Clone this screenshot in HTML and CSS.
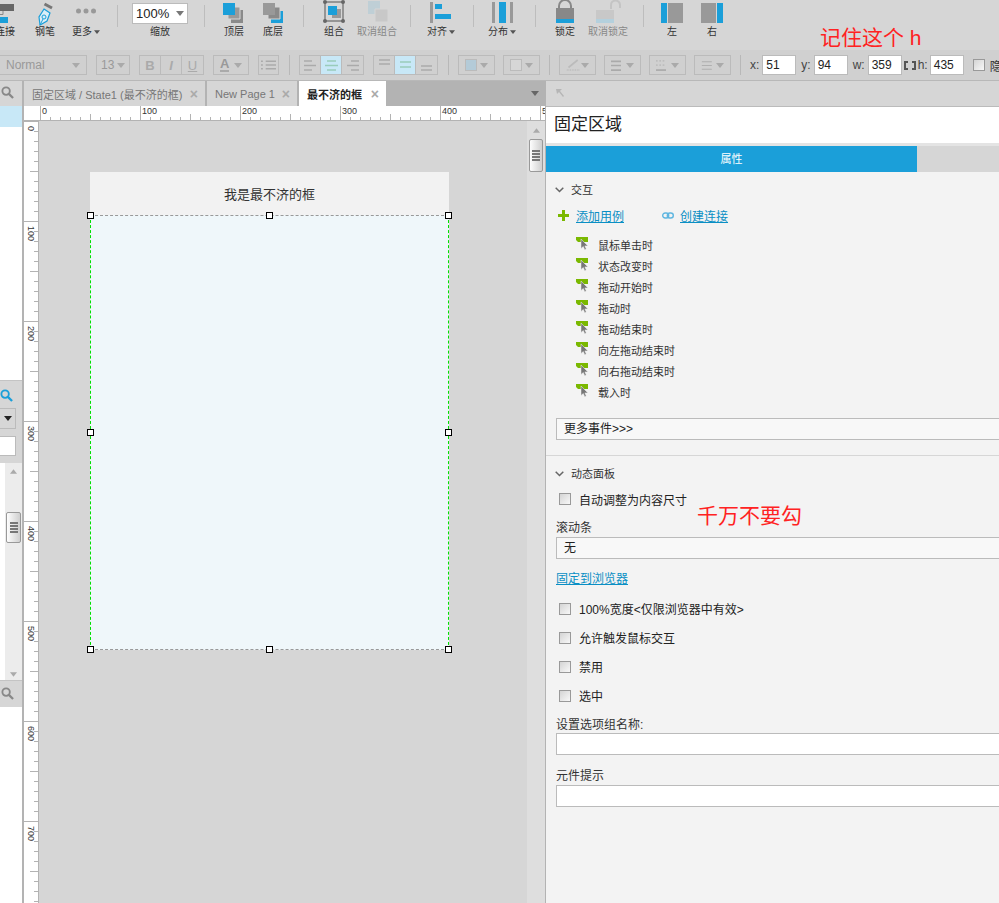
FILE: index.html
```html
<!DOCTYPE html>
<html lang="en">
<head>
    <meta charset="UTF-8">
    <title>固定区域</title>
    <link rel="stylesheet" href="styles.css">
</head>
<body>
    <svg class="defs" width="0" height="0">
        <symbol id="search" viewBox="0 0 14 14"><circle cx="5.5" cy="5.5" r="4" fill="none" stroke="currentColor" stroke-width="2"/><path d="M8.5 8.5 13 13" stroke="currentColor" stroke-width="2.4"/></symbol>
        <symbol id="caret" viewBox="0 0 8 5"><path d="M0 0h8L4 5z" fill="currentColor"/></symbol>
        <symbol id="event" viewBox="0 0 13 13"><path d="M0 0h12v5H2L0 3z" fill="#7ab800"/><path d="M5 2v9.500l2.300-2 1.400 3.200 1.600-.7-1.400-3.100H12z" fill="#777" stroke="#f3f3f3" stroke-width=".5"/></symbol>
    </svg>

    <header class="toolbar">
        <div class="tool w40">
            <svg width="26" height="24" viewBox="0 0 26 24"><path d="M4 4h18v7H4z" fill="#666"/><path d="M11 11v3.500H4V17" stroke="#888" fill="none"/><path d="M-2 17H16v6H-2z" fill="#1b9fd9"/></svg>
            <span>连接</span>
        </div>
        <div class="tool w40">
            <svg width="22" height="26" viewBox="0 0 22 26"><path d="M10.500 4l7.500 4" stroke="#777" stroke-width="3"/><path d="M10 9l6 4-3 8-7 4-1-8z" fill="#dbeef7" stroke="#1b9fd9" stroke-width="1.200"/><circle cx="10" cy="17" r="2" fill="none" stroke="#1b9fd9"/><path d="M6 25l3-6" stroke="#1b9fd9"/></svg>
            <span>钢笔</span>
        </div>
        <div class="tool w42">
            <svg width="20" height="24" viewBox="0 0 20 24"><g fill="#999"><circle cx="2.500" cy="11" r="2.500"/><circle cx="10" cy="11" r="2.500"/><circle cx="17.500" cy="11" r="2.500"/></g></svg>
            <span>更多<svg class="mini-caret"><use href="#caret"/></svg></span>
        </div>
        <div class="sep"></div>
        <div class="tool zoom-tool">
            <div class="zoom-select">100%<svg class="caret"><use href="#caret"/></svg></div>
            <span>缩放</span>
        </div>
        <div class="sep"></div>
        <div class="tool w38">
            <svg width="22" height="24" viewBox="0 0 22 24"><path d="M8 10h12v13H8z" fill="#8a8a8a"/><path d="M5 7h12v12H5z" fill="#999" stroke="#d6d6d6"/><path d="M0 3h12v12H0z" fill="#1b9fd9"/></svg>
            <span>顶层</span>
        </div>
        <div class="tool w40">
            <svg width="22" height="24" viewBox="0 0 22 24"><path d="M9 11h12v12H9z" fill="#1b9fd9"/><path d="M6 7h12v12H6z" fill="#8a8a8a" stroke="#d6d6d6"/><path d="M1 3h12v12H1z" fill="#999"/></svg>
            <span>底层</span>
        </div>
        <div class="sep"></div>
        <div class="tool w40">
            <svg width="22" height="24" viewBox="0 0 22 24"><path d="M2 2h18v19H2z" fill="none" stroke="#555"/><g fill="#666"><circle cx="2" cy="2" r="2"/><circle cx="20" cy="2" r="2"/><circle cx="2" cy="21" r="2"/><circle cx="20" cy="21" r="2"/></g><path d="M9 9h9v9H9z" fill="#999"/><path d="M5 6h9v9H5z" fill="#1b9fd9"/></svg>
            <span>组合</span>
        </div>
        <div class="tool w46 off">
            <svg width="24" height="24" viewBox="0 0 24 24"><path d="M3 1h12v13H3z" fill="#bfcfd6"/><path d="M10 9h13v13H10z" fill="#c8c8c8" stroke="#d6d6d6"/></svg>
            <span>取消组合</span>
        </div>
        <div class="sep"></div>
        <div class="tool w40">
            <svg width="22" height="24" viewBox="0 0 22 24"><path d="M0 2h3v21H0z" fill="#999"/><path d="M5 4h7v5H5zM5 14h16v5H5z" fill="#1b9fd9"/></svg>
            <span>对齐<svg class="mini-caret"><use href="#caret"/></svg></span>
        </div>
        <div class="sep shift"></div>
        <div class="tool w40">
            <svg width="22" height="24" viewBox="0 0 22 24"><path d="M1 2h3v21H1zM19 2h3v21h-3z" fill="#999"/><path d="M8 2h7v21H8z" fill="#1b9fd9"/></svg>
            <span>分布<svg class="mini-caret"><use href="#caret"/></svg></span>
        </div>
        <div class="sep wide"></div>
        <div class="tool w40">
            <svg width="20" height="24" viewBox="0 0 20 24"><path d="M4 9V6a6 6 0 0 1 12 0v3" fill="none" stroke="#888" stroke-width="2"/><path d="M1 8h18v11H1z" fill="#888"/><path d="M1 19h18v4H1z" fill="#1b9fd9"/></svg>
            <span>锁定</span>
        </div>
        <div class="tool w46 off">
            <svg width="26" height="24" viewBox="0 0 26 24"><path d="M16 9V5a4.500 4.500 0 0 1 9 0v3" fill="none" stroke="#c4c4c4" stroke-width="2"/><path d="M1 10h18v9H1z" fill="#c8c8c8"/><path d="M1 19h18v4H1z" fill="#b4d0dd"/></svg>
            <span>取消锁定</span>
        </div>
        <div class="sep shift"></div>
        <div class="tool w40">
            <svg width="22" height="24" viewBox="0 0 22 24"><path d="M0 3h6v20H0z" fill="#1b9fd9"/><path d="M7 3h15v20H7z" fill="#999"/></svg>
            <span>左</span>
        </div>
        <div class="tool w40">
            <svg width="22" height="24" viewBox="0 0 22 24"><path d="M0 3h15v20H0z" fill="#999"/><path d="M16 3h6v20h-6z" fill="#1b9fd9"/></svg>
            <span>右</span>
        </div>
    </header>

    <div class="formatbar">
        <div class="fbox style-box">Normal<svg class="caret"><use href="#caret"/></svg></div>
        <div class="fbox size-box">13<svg class="caret"><use href="#caret"/></svg></div>
        <div class="fgroup">
            <div class="fcell bold">B</div>
            <div class="fcell ital">I</div>
            <div class="fcell under">U</div>
        </div>
        <div class="fbox color-box"><span class="font-a">A</span><svg class="caret"><use href="#caret"/></svg></div>
        <div class="fbox list-box"><svg width="16" height="10" viewBox="0 0 16 10"><path d="M0 1h2M5 1h11M0 5h2M5 5h11M0 9h2M5 9h11" stroke="#aaa" stroke-width="1.500"/></svg></div>
        <div class="fsep"></div>
        <div class="fgroup">
            <div class="fcell"><svg width="13" height="11" viewBox="0 0 13 11"><path d="M0 1h8M0 5.500h12M0 10h8" stroke="#aaa" stroke-width="1.500"/></svg></div>
            <div class="fcell on"><svg width="13" height="11" viewBox="0 0 13 11"><path d="M2 1h9M0 5.500h13M2 10h9" stroke="#9cb" stroke-width="1.500"/></svg></div>
            <div class="fcell"><svg width="13" height="11" viewBox="0 0 13 11"><path d="M5 1h8M1 5.500h12M5 10h8" stroke="#aaa" stroke-width="1.500"/></svg></div>
        </div>
        <div class="fgroup">
            <div class="fcell"><svg width="13" height="12" viewBox="0 0 13 12"><path d="M1 1h11M1 5h11" stroke="#aaa" stroke-width="1.500"/></svg></div>
            <div class="fcell on"><svg width="13" height="12" viewBox="0 0 13 12"><path d="M1 3h11M1 8h11" stroke="#9cb" stroke-width="1.500"/></svg></div>
            <div class="fcell"><svg width="13" height="12" viewBox="0 0 13 12"><path d="M1 7h11M1 11h11" stroke="#aaa" stroke-width="1.500"/></svg></div>
        </div>
        <div class="fsep"></div>
        <div class="fbox swatch-box"><span class="swatch fill"></span><svg class="caret"><use href="#caret"/></svg></div>
        <div class="fbox swatch-box"><span class="swatch shadow"></span><svg class="caret"><use href="#caret"/></svg></div>
        <div class="fsep"></div>
        <div class="fbox swatch-box"><svg width="18" height="14" viewBox="0 0 18 14"><path d="M3 10 14 1" stroke="#bbb" stroke-width="2"/><path d="M1 13h16" stroke="#aaa" stroke-dasharray="1 1"/></svg><svg class="caret"><use href="#caret"/></svg></div>
        <div class="fbox swatch-box"><svg width="18" height="13" viewBox="0 0 18 13"><path d="M0 1.500h12M0 6.500h12M0 12h12" stroke="#aaa" stroke-width="2"/></svg><svg class="caret"><use href="#caret"/></svg></div>
        <div class="fbox swatch-box"><svg width="18" height="13" viewBox="0 0 18 13"><path d="M0 1h12M0 6h12" stroke="#aaa" stroke-dasharray="2 2"/><path d="M0 12h12" stroke="#aaa" stroke-width="2"/></svg><svg class="caret"><use href="#caret"/></svg></div>
        <div class="fbox swatch-box"><svg width="18" height="13" viewBox="0 0 18 13"><path d="M1 2h12M1 6.500h12M1 11h12" stroke="#aaa"/></svg><svg class="caret"><use href="#caret"/></svg></div>
        <div class="fsep"></div>
        <label class="coord">x:<span class="coord-input">51</span></label>
        <label class="coord">y:<span class="coord-input">94</span></label>
        <label class="coord">w:<span class="coord-input">359</span></label>
        <svg class="link-size" width="12" height="9" viewBox="0 0 12 9"><path d="M4 1H1v7h3M8 1h3v7H8" fill="none" stroke="#555" stroke-width="2"/></svg>
        <label class="coord coord-h">h:<span class="coord-input">435</span></label>
        <span class="check"></span>
        <span class="hide-label">隐藏</span>
    </div>

    <div class="main">
        <aside class="sidebar">
            <div class="side-search"><svg class="search-icon"><use href="#search"/></svg></div>
            <div class="side-selected"></div>
            <div class="side-white top-white"></div>
            <div class="side-tools">
                <svg class="search-icon blue"><use href="#search"/></svg>
                <div class="side-select"><svg class="caret dark"><use href="#caret"/></svg></div>
                <div class="side-input"></div>
            </div>
            <div class="side-list">
                <div class="side-scroll">
                    <svg class="arrow"><use href="#caret"/></svg>
                    <div class="side-thumb"><i></i><i></i><i></i><i></i></div>
                    <svg class="arrow down"><use href="#caret"/></svg>
                </div>
            </div>
            <div class="side-search bottom"><svg class="search-icon"><use href="#search"/></svg></div>
            <div class="side-white"></div>
        </aside>

        <section class="center">
            <nav class="tabs">
                <div class="tab tab-one">固定区域 / State1 (最不济的框)<b>×</b></div>
                <div class="tab tab-two">New Page 1<b>×</b></div>
                <div class="tab active">最不济的框<b>×</b></div>
                <svg class="tabs-caret"><use href="#caret"/></svg>
            </nav>
            <div class="ruler-top">
                <div class="ruler-corner"></div>
                <div class="rcell">0</div>
                <div class="rcell">100</div>
                <div class="rcell">200</div>
                <div class="rcell">300</div>
                <div class="rcell">400</div>
                <div class="rcell">500</div>
            </div>
            <div class="stage">
                <div class="ruler-left">
                    <div class="vcell"><span>0</span></div>
                    <div class="vcell"><span>100</span></div>
                    <div class="vcell"><span>200</span></div>
                    <div class="vcell"><span>300</span></div>
                    <div class="vcell"><span>400</span></div>
                    <div class="vcell"><span>500</span></div>
                    <div class="vcell"><span>600</span></div>
                    <div class="vcell"><span>700</span></div>
                </div>
                <div class="canvas">
                    <div class="widget-head">我是最不济的框</div>
                    <div class="widget-body">
                        <i class="handle tl"></i><i class="handle tc"></i><i class="handle tr"></i>
                        <i class="handle ml"></i><i class="handle mr"></i>
                        <i class="handle bl"></i><i class="handle bc"></i><i class="handle br"></i>
                    </div>
                </div>
                <div class="canvas-scroll">
                    <svg class="arrow"><use href="#caret"/></svg>
                    <div class="canvas-thumb"><i></i><i></i><i></i><i></i></div>
                </div>
            </div>
        </section>

        <section class="panel">
            <div class="panel-top">
                <svg width="10" height="10" viewBox="0 0 10 10"><path d="M1 1h6L5 3l4 5-1 1-4-5-2 2z" fill="#b5b5b5"/></svg>
            </div>
            <div class="panel-title">固定区域</div>
            <div class="panel-tabs">
                <div class="ptab active">属性</div>
                <div class="ptab"></div>
            </div>
            <div class="sec-head first"><svg class="chev" viewBox="0 0 9 6"><path d="M.7.7 4.500 4.500 8.300.7" fill="none" stroke="#666" stroke-width="1.500"/></svg>交互</div>
            <div class="actions">
                <svg width="11" height="11" viewBox="0 0 11 11"><path d="M4 0h3v4h4v3H7v4H4V7H0V4h4z" fill="#7ab800"/></svg>
                <a class="link add-case">添加用例</a>
                <svg width="12" height="7" viewBox="0 0 12 7"><rect x=".7" y="1" width="6" height="5" rx="2.500" fill="none" stroke="#5fb6e0" stroke-width="1.400"/><rect x="5.300" y="1" width="6" height="5" rx="2.500" fill="none" stroke="#5fb6e0" stroke-width="1.400"/></svg>
                <a class="link">创建连接</a>
            </div>
            <ul class="events">
                <li><svg class="ev-icon"><use href="#event"/></svg>鼠标单击时</li>
                <li><svg class="ev-icon"><use href="#event"/></svg>状态改变时</li>
                <li><svg class="ev-icon"><use href="#event"/></svg>拖动开始时</li>
                <li><svg class="ev-icon"><use href="#event"/></svg>拖动时</li>
                <li><svg class="ev-icon"><use href="#event"/></svg>拖动结束时</li>
                <li><svg class="ev-icon"><use href="#event"/></svg>向左拖动结束时</li>
                <li><svg class="ev-icon"><use href="#event"/></svg>向右拖动结束时</li>
                <li><svg class="ev-icon"><use href="#event"/></svg>载入时</li>
            </ul>
            <div class="field more">更多事件&gt;&gt;&gt;</div>
            <div class="divider"></div>
            <div class="sec-head"><svg class="chev" viewBox="0 0 9 6"><path d="M.7.7 4.500 4.500 8.300.7" fill="none" stroke="#666" stroke-width="1.500"/></svg>动态面板</div>
            <div class="check-row auto"><span class="check"></span>自动调整为内容尺寸</div>
            <div class="f-label scroll-label">滚动条</div>
            <div class="field">无</div>
            <a class="link pin">固定到浏览器</a>
            <div class="check-row wide"><span class="check"></span>100%宽度&lt;仅限浏览器中有效&gt;</div>
            <div class="check-row"><span class="check"></span>允许触发鼠标交互</div>
            <div class="check-row"><span class="check"></span>禁用</div>
            <div class="check-row"><span class="check"></span>选中</div>
            <div class="f-label group-label">设置选项组名称:</div>
            <div class="field blank"></div>
            <div class="f-label tip-label">元件提示</div>
            <div class="field blank"></div>
        </section>
    </div>

    <div class="note note-h">记住这个 h</div>
    <div class="note note-check">千万不要勾</div>
</body>
</html>
```

FILE: styles.css
```css
* {
    margin: 0;
    padding: 0;
    box-sizing: border-box;
}

html, body {
    height: 903px;
    overflow: hidden;
}

body {
    position: relative;
    background-color: #d6d6d6;
    font-family: "Liberation Sans", "Noto Sans CJK SC", sans-serif;
    font-size: 12px;
    color: #333;
}

.defs {
    position: absolute;
}

.caret {
    width: 8px;
    height: 5px;
    color: #aaa;
    flex: none;
}

.caret.dark {
    color: #222;
}

/* top toolbar */
.toolbar {
    display: flex;
    height: 50px;
    margin-left: -15px;
    background-color: #d6d6d6;
}

.tool {
    display: flex;
    flex-direction: column;
    align-items: center;
    flex: none;
    height: 50px;
}

.tool > svg {
    flex: none;
    margin-bottom: 1px;
    overflow: visible;
}

.tool > span {
    position: absolute;
    top: 25px;
    font-size: 10px;
    line-height: 14px;
    white-space: nowrap;
}

.tool.off > span {
    color: #888;
}

.mini-caret {
    width: 6px;
    height: 4px;
    margin-left: 2px;
    color: #555;
    vertical-align: 1px;
}

.w38 { width: 38px; }
.w40 { width: 40px; }
.w42 { width: 42px; }
.w46 { width: 46px; }

.sep {
    flex: none;
    width: 1px;
    height: 22px;
    margin: 5px 10px 0;
    background-color: #bdbdbd;
}

.sep.shift { margin: 5px 8px 0 12px; }
.sep.wide { margin: 5px 9px 0 13px; }

.zoom-tool {
    width: 66px;
    padding-right: 2px;
}

.zoom-select {
    display: flex;
    justify-content: space-between;
    align-items: center;
    width: 56px;
    height: 21px;
    margin: 3px 0 1px;
    padding: 0 3px 0 3px;
    background-color: #fff;
    border: 1px solid #bbb;
    font-size: 13px;
    color: #222;
}

.zoom-select .caret {
    color: #777;
}

/* format bar */
.formatbar {
    display: flex;
    align-items: center;
    height: 31px;
    background-color: #d0d0d0;
    border-bottom: 1px solid #b8b8b8;
    white-space: nowrap;
    overflow: hidden;
}

.fbox {
    display: flex;
    align-items: center;
    justify-content: space-between;
    flex: none;
    height: 20px;
    margin-right: 9px;
    padding: 0 6px;
    border: 1px solid #bbb;
    color: #999;
}

.style-box { width: 88px; margin-left: -1px; }
.size-box { width: 34px; padding: 0 4px; }
.color-box { width: 36px; }
.list-box { width: 21px; padding: 0 2px; justify-content: center; }
.swatch-box { width: 37px; margin-right: 8px; padding: 0 6px; }

.font-a {
    font-weight: bold;
    font-size: 13px;
    border-bottom: 2px solid #aaa;
    line-height: 12px;
}

.swatch {
    width: 12px;
    height: 12px;
    border: 1px solid #bbb;
}

.swatch.fill { background-color: #b4cbd8; }
.swatch.shadow { background-color: #d6d6d6; }

.fgroup {
    display: flex;
    flex: none;
    height: 20px;
    margin-right: 9px;
    border: 1px solid #bbb;
}

.fcell {
    display: flex;
    align-items: center;
    justify-content: center;
    width: 21px;
    border-right: 1px solid #bbb;
    color: #aaa;
    font-size: 13px;
    font-weight: bold;
}

.fcell:last-child {
    border-right: none;
}

.fcell.on { background-color: #c8e8f7; }
.fcell.ital { font-style: italic; }
.fcell.under { text-decoration: underline; font-weight: normal; }

.fsep {
    flex: none;
    width: 1px;
    height: 20px;
    margin: 0 9px 0 1px;
    background-color: #b8b8b8;
}

.coord {
    display: flex;
    align-items: center;
    flex: none;
    margin-right: 5px;
    gap: 3px;
    color: #444;
}

.coord-input {
    width: 34px;
    height: 20px;
    padding-left: 3px;
    background-color: #fff;
    border: 1px solid #bbb;
    line-height: 18px;
    color: #222;
}

.link-size {
    flex: none;
    margin: 0 2px 0 -3px;
}

.coord-h {
    margin-right: 9px;
    gap: 2px;
}

.hide-label {
    flex: none;
    margin-left: 5px;
}

.check {
    flex: none;
    width: 12px;
    height: 12px;
    background: linear-gradient(135deg, #d4d4d4, #f8f8f8);
    border: 1px solid #999;
}

/* main area */
.main {
    display: flex;
    height: 822px;
}

.sidebar {
    display: flex;
    flex-direction: column;
    flex: none;
    width: 24px;
    background-color: #d6d6d6;
    border-right: 2px solid #b3b3b3;
}

.side-search {
    height: 25px;
    padding: 5px 0 0 1px;
    color: #888;
}

.side-search.bottom {
    height: 27px;
    padding-top: 6px;
    border-top: 1px solid #c4c4c4;
}

.search-icon {
    display: block;
    width: 13px;
    height: 13px;
}

.search-icon.blue {
    color: #1b9fd9;
}

.side-selected {
    height: 21px;
    background-color: #c8e8f7;
}

.side-white {
    flex: 1;
    background-color: #fff;
}

.top-white {
    flex: none;
    height: 253px;
}

.side-tools {
    height: 83px;
    padding-top: 8px;
    border-top: 1px solid #c4c4c4;
}

.side-select {
    display: flex;
    align-items: center;
    justify-content: flex-end;
    width: 16px;
    height: 21px;
    margin-top: 6px;
    padding-right: 3px;
    border: 1px solid #bbb;
    border-left: none;
}

.side-input {
    width: 16px;
    height: 20px;
    margin-top: 7px;
    background-color: #fff;
    border: 1px solid #bbb;
    border-left: none;
}

.side-list {
    height: 217px;
    padding-left: 5px;
    background-color: #fff;
}

.side-scroll {
    position: relative;
    height: 100%;
    padding-top: 4px;
    background-color: #ececec;
}

.arrow {
    display: block;
    width: 7px;
    height: 5px;
    margin: 2px auto;
    color: #aaa;
    transform: rotate(180deg);
}

.arrow.down {
    position: absolute;
    left: 5px;
    bottom: 3px;
    margin: 0;
    transform: none;
}

.side-thumb, .canvas-thumb {
    display: flex;
    flex-direction: column;
    align-items: center;
    justify-content: center;
    gap: 1px;
    background: linear-gradient(90deg, #fdfdfd, #cfcfcf);
    border: 1px solid #999;
    border-radius: 2px;
}

.side-thumb {
    width: 15px;
    height: 31px;
    margin: 38px 0 0 1px;
}

.side-thumb i, .canvas-thumb i {
    display: block;
    width: 8px;
    height: 2px;
    background-color: #777;
}

/* center editor */
.center {
    display: flex;
    flex-direction: column;
    flex: none;
    width: 521px;
    background-color: #d6d6d6;
}

.tabs {
    display: flex;
    align-items: stretch;
    position: relative;
    height: 25px;
    background-color: #b3b3b3;
    white-space: nowrap;
}

.tab {
    display: flex;
    align-items: center;
    justify-content: space-between;
    flex: none;
    padding: 1px 7px 0 8px;
    background-color: #d6d6d6;
    border-right: 2px solid #b3b3b3;
    font-size: 11px;
    color: #777;
}

.tab b {
    font-size: 14px;
    color: #aaa;
}

.tab-one { width: 183px; }
.tab-two { width: 92px; }

.tab.active {
    width: 87px;
    background-color: #fff;
    border-right: none;
    color: #222;
    font-weight: bold;
}

.tabs-caret {
    position: absolute;
    right: 6px;
    top: 10px;
    width: 8px;
    height: 5px;
    color: #666;
}

.ruler-top {
    display: flex;
    height: 15px;
    overflow: hidden;
    background-color: #fff;
    border-bottom: 1px solid #b3b3b3;
}

.ruler-corner {
    flex: none;
    width: 16px;
}

.rcell {
    flex: none;
    width: 100px;
    padding-left: 1px;
    border-left: 1px solid #b3b3b3;
    font-size: 9px;
    line-height: 11px;
    color: #333;
    background-image:
        linear-gradient(90deg, transparent 49px, #b3b3b3 49px, #b3b3b3 50px, transparent 50px),
        repeating-linear-gradient(90deg, transparent 0, transparent 9px, #b3b3b3 9px, #b3b3b3 10px);
    background-size: 100% 6px, 100% 3px;
    background-position: 0 100%;
    background-repeat: no-repeat;
}

.stage {
    display: flex;
    flex: 1;
    min-height: 0;
}

.ruler-left {
    flex: none;
    width: 15px;
    overflow: hidden;
    background-color: #fff;
    border-right: 1px solid #b3b3b3;
}

.vcell {
    height: 100px;
    border-top: 1px solid #b3b3b3;
    background-image:
        linear-gradient(180deg, transparent 49px, #b3b3b3 49px, #b3b3b3 50px, transparent 50px),
        repeating-linear-gradient(180deg, transparent 0, transparent 9px, #b3b3b3 9px, #b3b3b3 10px);
    background-size: 8px 100%, 4px 100%;
    background-position: 100% 0;
    background-repeat: no-repeat;
}

.vcell span {
    display: block;
    padding: 4px 0 0 2px;
    writing-mode: vertical-rl;
    font-size: 9px;
    line-height: 9px;
}

.canvas {
    flex: 1;
    padding: 51px 0 0 51px;
}

.widget-head {
    width: 359px;
    height: 43px;
    background-color: #f2f2f2;
    font-size: 13px;
    line-height: 46px;
    text-align: center;
}

.widget-body {
    position: relative;
    width: 359px;
    height: 435px;
    background-color: #eff7fa;
    border-left: 1px dashed #00e000;
    border-right: 1px dashed #00e000;
    border-top: 1px dashed #999;
    border-bottom: 1px dashed #999;
}

.handle {
    position: absolute;
    width: 7px;
    height: 7px;
    background-color: #fff;
    border: 1px solid #000;
}

.tl, .tc, .tr { top: -4px; }
.bl, .bc, .br { bottom: -4px; }
.ml, .mr { top: 213px; }
.tl, .ml, .bl { left: -4px; }
.tr, .mr, .br { right: -4px; }
.tc, .bc { left: 175px; }

.canvas-scroll {
    flex: none;
    width: 18px;
    padding-top: 5px;
    background-color: #dedede;
}

.canvas-thumb {
    width: 14px;
    height: 33px;
    margin: 6px 0 0 2px;
}

/* right panel */
.panel {
    flex: 1;
    min-width: 0;
    overflow: hidden;
    background-color: #f3f3f3;
    border-left: 1px solid #b3b3b3;
}

.panel-top {
    height: 26px;
    padding: 6px 0 0 9px;
    background-color: #d6d6d6;
    border-bottom: 1px solid #bbb;
}

.panel-title {
    height: 39px;
    padding-left: 8px;
    background-color: #fff;
    border-bottom: 3px solid #e4e4e4;
    font-size: 17px;
    line-height: 36px;
    color: #222;
}

.panel-tabs {
    display: flex;
    height: 26px;
    background-color: #d6d6d6;
}

.ptab.active {
    width: 371px;
    background-color: #1b9fd9;
    color: #fff;
    font-size: 11px;
    line-height: 26px;
    text-align: center;
}

.sec-head {
    display: flex;
    align-items: center;
    padding-left: 9px;
    line-height: 18px;
    font-size: 11px;
    color: #333;
}

.sec-head.first { margin-top: 9px; }

.chev {
    width: 9px;
    height: 6px;
    margin-right: 7px;
}

.actions {
    display: flex;
    align-items: center;
    height: 18px;
    margin-top: 7px;
    padding-left: 12px;
}

.link {
    color: #0a8fc4;
    text-decoration: underline;
}

.add-case {
    margin: 0 38px 0 7px;
}

.actions svg + .link:last-child {
    margin-left: 6px;
}

.events {
    list-style: none;
    margin-top: 10px;
    padding-left: 30px;
}

.events li {
    display: flex;
    align-items: center;
    height: 21px;
    font-size: 11px;
}

.ev-icon {
    flex: none;
    width: 13px;
    height: 13px;
    margin: -2px 9px 0 0;
}

.field {
    height: 22px;
    margin: 0 -4px 0 10px;
    padding-left: 7px;
    background-color: #f8f8f8;
    border: 1px solid #bbb;
    line-height: 20px;
    color: #222;
}

.field.more { margin-top: 16px; }
.field.blank { background-color: #fff; }

.divider {
    height: 1px;
    margin-top: 15px;
    background-color: #d6d6d6;
}

.divider + .sec-head { margin-top: 9px; }

.check-row {
    display: flex;
    align-items: center;
    height: 29px;
    padding-left: 13px;
    gap: 8px;
    color: #222;
}

.check-row.auto {
    margin-top: 3px;
    height: 26px;
}

.check-row.wide { margin-top: 7px; }

.f-label {
    padding-left: 10px;
    line-height: 16px;
    color: #333;
}

.scroll-label { margin-top: 8px; margin-bottom: 1px; }

.pin {
    display: block;
    margin: 12px 0 0 10px;
    line-height: 16px;
}

.group-label { margin-top: 7px; }
.tip-label { margin-top: 13px; margin-bottom: 1px; }

/* red notes typed over the screenshot */
.note {
    position: absolute;
    color: #f22;
    white-space: nowrap;
    font-size: 21px;
    line-height: 26px;
}

.note-h { left: 820px; top: 25px; }
.note-check { left: 697px; top: 503px; }
```
